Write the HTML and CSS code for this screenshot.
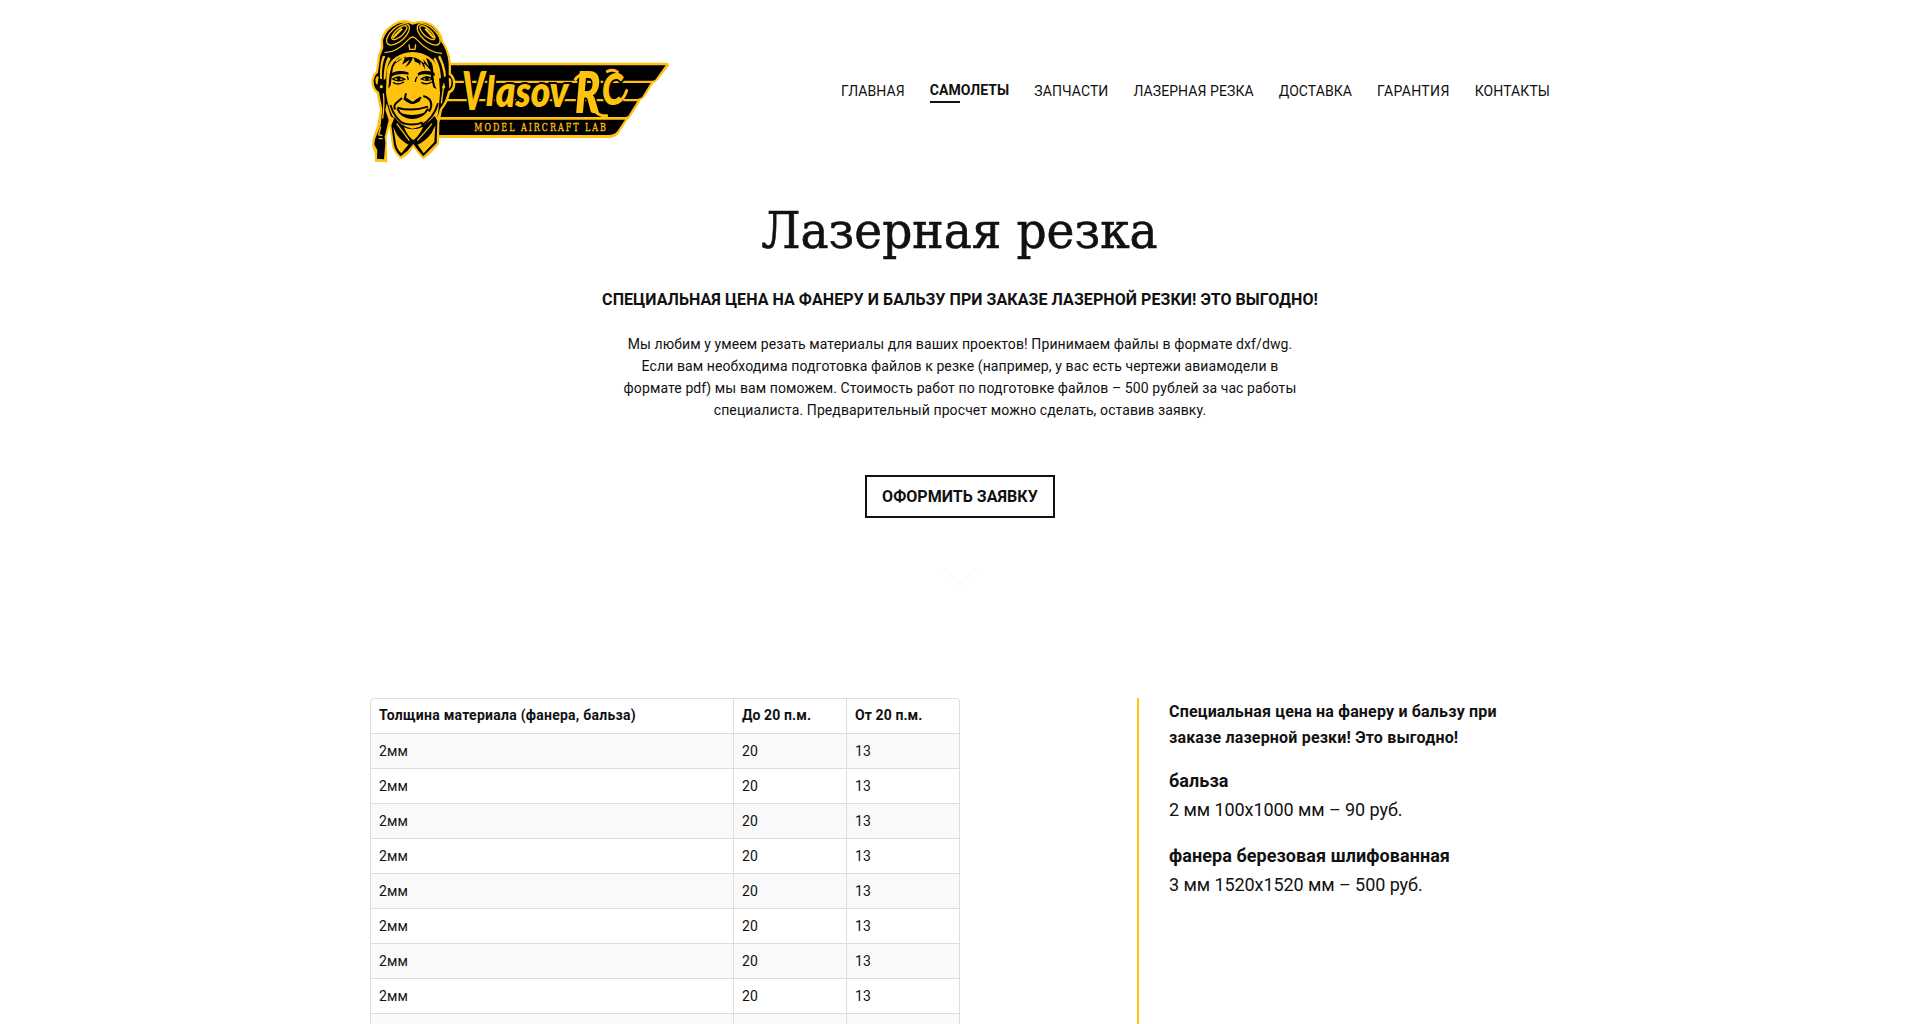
FILE: index.html
```html
<!DOCTYPE html>
<html lang="ru">
<head>
<meta charset="utf-8">
<title>Лазерная резка</title>
<link rel="stylesheet" href="styles.css">
</head>
<body>
<header class="header">
  <a class="logo" href="#">
    <svg width="301" height="146" viewBox="30 24 903 438" aria-label="Vlasov RC">
      <!-- wing -->
      <path class="gold" d="M230 158H920Q930 160 926 168L893 210Q886 215 880 220L853 262Q842 268 838 278L810 322Q800 328 798 336L775 372Q765 383 748 384H225Z"/>
      <path d="M235 166H917L886 209Q882 212 875 212H235ZM235 219H872L846 262Q840 266 832 267H235ZM235 274H832L805 317Q800 321 794 321H235ZM235 329H795L772 364Q764 375 745 375H235Z"/>
      <!-- lettering -->
      <g class="brand">
        <text x="306" y="300" font-size="160" textLength="68" lengthAdjust="spacingAndGlyphs">V</text>
        <text x="378" y="287" font-size="124" textLength="26" lengthAdjust="spacingAndGlyphs">l</text>
        <text x="407" y="291" font-size="130" textLength="218" lengthAdjust="spacingAndGlyphs">asov</text>
        <text x="645" y="308" font-size="168" textLength="76" lengthAdjust="spacingAndGlyphs">R</text>
        <text x="726" y="286" font-size="130" textLength="62" lengthAdjust="spacingAndGlyphs">C</text>
      </g>
      <path class="swash" d="M646 208Q656 192 684 188M742 184Q760 176 772 186M700 296Q714 320 740 317M772 278Q790 270 800 242"/>
      <text class="tagline" transform="translate(343 363) scale(.72 1)" textLength="548" lengthAdjust="spacing">MODEL AIRCRAFT LAB</text>
      <!-- silhouette -->
      <path class="gold" d="M115 33Q140 26 158 37Q185 26 212 40Q242 56 250 95Q268 118 273 160V190Q287 202 286 222Q286 242 270 250Q266 275 246 300L238 340L237 402L214 428L190 448Q175 434 160 411Q146 438 122 447Q106 434 97 414L88 350L80 382L82 457L45 455L44 428L36 408L38 386L52 345L60 300L50 250Q34 238 34 214Q36 192 48 184L54 135L63 112L62 90Q72 50 115 33Z"/>
      <!-- helmet and straps -->
      <path d="M158 44Q188 33 209 46Q235 60 242 94Q262 120 266 160V194Q280 204 279 222Q278 238 264 244Q258 275 240 296L232 325Q238 280 240 250L236 180Q220 130 158 126Q95 130 80 180L78 250Q86 305 104 327L92 318L80 280L76 300L86 330L74 380L76 400L72 448L51 446L52 420L43 404L45 388L62 345L67 298L57 246Q42 236 41 215Q42 196 54 188L61 137L70 114L69 90Q78 58 114 41Q140 34 158 44Z"/>
      <!-- helmet seams -->
      <path class="gold" d="M76 138Q64 166 66 208L60 206Q58 166 68 138ZM92 146Q78 170 77 206L71 210Q70 168 84 140ZM240 136Q256 166 258 198L252 202Q248 166 234 142ZM226 142Q242 170 243 204L238 206Q234 170 220 148ZM46 210Q48 196 56 200L52 226Q46 222 46 210ZM274 212Q272 200 266 204L268 236Q276 226 274 212Z"/>
      <!-- goggles -->
      <g class="line">
        <ellipse cx="114" cy="73" rx="42" ry="21" transform="rotate(-42 114 73)"/>
        <ellipse cx="118" cy="68" rx="29" ry="11" transform="rotate(-42 118 68)"/>
        <ellipse cx="206" cy="73" rx="42" ry="21" transform="rotate(42 206 73)"/>
        <ellipse cx="202" cy="68" rx="29" ry="11" transform="rotate(42 202 68)"/>
        <path d="M74 128Q110 128 146 88Q158 74 170 88Q208 130 246 130M147 103L149 118H165L167 103M70 250Q74 280 68 326M62 350L56 374L67 377M56 386H68M252 220L244 280"/>
        <path d="M98 84L126 56M222 84L196 56" stroke-width="7"/>
      </g>
      <circle class="gold" cx="64" cy="230" r="5"/>
      <circle class="gold" cx="251" cy="231" r="5"/>
      <!-- face -->
      <path class="gold" d="M158 132Q211 132 226 181L235 240L227 298Q197 350 158 354Q119 348 92 300L80 248L86 182Q102 134 158 132Z"/>
      <!-- hair, brows, eyes, nose, smile -->
      <path d="M95 168Q106 145 124 140L106 152L110 158L137 139L126 164L149 149L136 172Q155 160 159 141L165 155Q179 158 180 168L182 154L196 180L190 148L207 170L198 143Q219 152 220 182Q219 218 230 238L220 232Q211 205 211 180Q178 138 148 141Q105 145 98 178L92 226L85 236L89 192Z"/>
      <path d="M90 194Q108 176 145 187L146 194Q115 187 91 201ZM173 189Q196 176 224 189L224 198Q198 188 174 197Z"/>
      <g class="stroke">
        <path d="M98 207Q115 195 134 208Q115 217 98 207ZM184 207Q200 195 218 207Q201 215 184 207ZM99 217Q115 228 132 215M184 217Q199 226 215 216M142 198L145 210M172 200Q165 208 166 216"/>
        <path class="thick" d="M138 250L134 268L152 278H162L176 272L182 261M126 264L112 276Q98 286 106 298M190 258Q214 264 214 286Q212 300 206 304M112 293Q156 306 204 290M112 296Q124 324 157 324Q190 324 204 296M126 338Q156 350 188 337M91 285Q104 326 132 342M234 280Q221 326 184 346"/>
      </g>
      <path d="M136 262Q148 268 158 276Q168 268 178 262L176 274L160 282L140 276ZM124 310Q157 320 192 309Q178 326 157 326Q136 326 124 310Z"/>
      <ellipse cx="116" cy="205" rx="6" ry="6"/>
      <ellipse cx="201" cy="205" rx="6" ry="6"/>
      <!-- collar -->
      <path d="M104 322Q122 350 158 356Q196 350 224 318L232 332L230 399L190 439Q176 424 160 402Q144 424 122 439Q106 424 102 406L94 346Z"/>
      <path class="gold" d="M100 352L110 373Q124 394 145 404L124 430Q112 420 108 402ZM226 346L215 369Q196 394 173 404L191 430L223 396ZM132 352Q158 364 190 350Q178 376 160 391Q142 378 132 352Z"/>
      <path class="line" d="M110 341Q126 362 148 392M216 341Q196 366 172 392"/>
    </svg>
  </a>
  <nav class="nav">
    <a href="#">ГЛАВНАЯ</a>
    <a class="active" href="#">САМОЛЕТЫ</a>
    <a href="#">ЗАПЧАСТИ</a>
    <a href="#">ЛАЗЕРНАЯ РЕЗКА</a>
    <a href="#">ДОСТАВКА</a>
    <a class="wide" href="#">ГАРАНТИЯ</a>
    <a href="#">КОНТАКТЫ</a>
  </nav>
</header>
<main>
  <section class="intro">
    <h1>Лазерная резка</h1>
    <p class="lead">СПЕЦИАЛЬНАЯ ЦЕНА НА ФАНЕРУ И БАЛЬЗУ ПРИ ЗАКАЗЕ ЛАЗЕРНОЙ РЕЗКИ! ЭТО ВЫГОДНО!</p>
    <p class="text">Мы любим у умеем резать материалы для ваших проектов! Принимаем файлы в формате dxf/dwg.<br>Если вам необходима подготовка файлов к резке (например, у вас есть чертежи авиамодели в<br>формате pdf) мы вам поможем. Стоимость работ по подготовке файлов – 500 рублей за час работы<br>специалиста. Предварительный просчет можно сделать, оставив заявку.</p>
    <a class="button" href="#">ОФОРМИТЬ ЗАЯВКУ</a>
    <svg class="chevron" width="34" height="18" viewBox="0 0 34 18"><path d="M.5 .5L17 17L33.500 .5"/></svg>
  </section>
  <section class="prices">
    <div class="table-box">
      <table>
        <thead><tr><th>Толщина материала (фанера, бальза)</th><th>До 20 п.м.</th><th>От 20 п.м.</th></tr></thead>
        <tbody>
          <tr><td>2мм</td><td>20</td><td>13</td></tr>
          <tr><td>2мм</td><td>20</td><td>13</td></tr>
          <tr><td>2мм</td><td>20</td><td>13</td></tr>
          <tr><td>2мм</td><td>20</td><td>13</td></tr>
          <tr><td>2мм</td><td>20</td><td>13</td></tr>
          <tr><td>2мм</td><td>20</td><td>13</td></tr>
          <tr><td>2мм</td><td>20</td><td>13</td></tr>
          <tr><td>2мм</td><td>20</td><td>13</td></tr>
          <tr><td></td><td></td><td></td></tr>
        </tbody>
      </table>
    </div>
    <aside class="offer">
      <p class="offer-title">Специальная цена на фанеру и бальзу при<br>заказе лазерной резки! Это выгодно!</p>
      <p class="item"><b>бальза</b><br>2 мм 100х1000 мм – 90 руб.</p>
      <p class="item"><b>фанера березовая шлифованная</b><br>3 мм 1520х1520 мм – 500 руб.</p>
    </aside>
  </section>
</main>
</body>
</html>
```
FILE: styles.css
```css
* { box-sizing: border-box; }
html { overflow: hidden; }
body {
  margin: 0;
  height: 1024px;
  overflow: hidden;
  background: #fff;
  color: #111;
  font-family: Roboto, "Liberation Sans", sans-serif;
  font-size: 14px;
  letter-spacing: .1px;
}
a { color: inherit; text-decoration: none; }
p { margin: 0; }

.header, .prices { width: 1180px; margin: 0 auto; display: flex; }
.header { height: 182px; align-items: center; justify-content: space-between; }
.logo, .logo svg { display: block; }
.gold { fill: #ffc20e; }
.brand { fill: #ffc20e; stroke: #000; stroke-width: 12; paint-order: stroke; font-family: Lato, sans-serif; font-weight: 800; font-style: italic; letter-spacing: 0; }
.swash { fill: none; stroke: #ffc20e; stroke-width: 9; stroke-linecap: round; }
.tagline { fill: #ffc20e; stroke: #ffc20e; stroke-width: 1; font-family: "Roboto Slab", "DejaVu Serif", serif; font-size: 33px; letter-spacing: 0; }
.line { fill: none; stroke: #ffc20e; stroke-width: 4; }
.stroke { fill: none; stroke: #000; stroke-width: 4; }
.thick { stroke-width: 6; }

.nav { display: flex; gap: 25px; padding-top: 2px; letter-spacing: .08px; }
.nav a { line-height: 20px; white-space: nowrap; }
.nav .wide { letter-spacing: .38px; }
.nav .active { font-weight: 700; line-height: 18px; }
.nav .active::after { content: ""; display: block; width: 30px; height: 2px; margin-top: 2px; background: #111; }

.intro { display: flex; flex-direction: column; align-items: center; text-align: center; }
h1 {
  margin: 14px 0 0;
  font: 400 50px/70px "Roboto Slab", "DejaVu Serif", serif;
  letter-spacing: 0;
  transform: translateX(-1px) scaleX(.942);
  -webkit-text-stroke: .6px #111;
}
.lead { margin-top: 22px; font-size: 16px; font-weight: 700; line-height: 24px; letter-spacing: .06px; }
.text { margin-top: 21px; line-height: 22px; }
.button { margin-top: 54px; width: 190px; height: 43px; border: 2px solid #111; font-size: 16px; font-weight: 700; line-height: 39px; letter-spacing: .04px; }
.chevron { margin-top: 50px; fill: none; stroke: #dff7f7; }

.prices { margin-top: 112px; }
.table-box { width: 590px; height: 340px; border: 1px solid #ddd; border-radius: 4px; overflow: hidden; }
table { width: 588px; table-layout: fixed; border-collapse: separate; border-spacing: 0; }
th, td { height: 35px; padding: 0 8px; text-align: left; border-bottom: 1px solid #ddd; border-left: 1px solid #ddd; }
th { padding-bottom: 2px; letter-spacing: .1px; }
th:first-child, td:first-child { width: 362px; border-left: 0; }
th:first-child { letter-spacing: .25px; }
tbody tr:nth-child(odd) { background: #f9f9f9; }
.offer { width: 412px; height: 340px; margin-left: 177px; padding: 1px 0 0 30px; border-left: 2px solid #ffc20e; }
.offer-title { font-size: 16px; font-weight: 700; line-height: 26px; letter-spacing: .18px; }
.item { margin-top: 15px; font-size: 18px; line-height: 29px; letter-spacing: -.07px; }
.item b { letter-spacing: .07px; }
.item + .item { margin-top: 17px; }
```
